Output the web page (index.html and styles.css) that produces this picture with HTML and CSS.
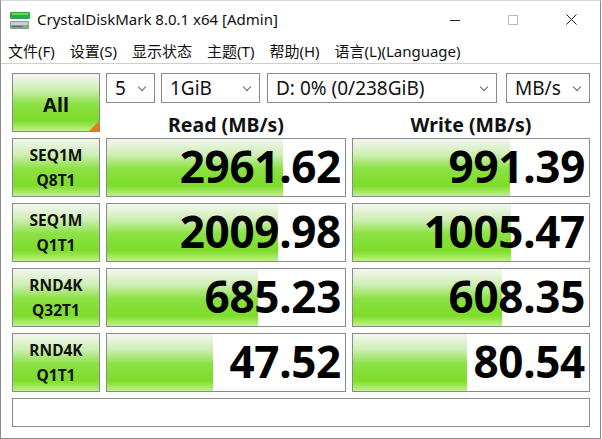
FILE: index.html
```html
<!DOCTYPE html>
<html lang="zh-CN">
<head>
    <meta charset="UTF-8">
    <title>CrystalDiskMark 8.0.1 x64 [Admin]</title>
    <link rel="stylesheet" href="styles.css">
</head>
<body>
    <div class="window">
        <div class="titlebar">
            <svg class="app-icon" width="22" height="22" viewBox="0 0 22 22">
                <rect x="1" y="3" width="20" height="7" rx="1" fill="#2fa84a"/>
                <rect x="3" y="4" width="16" height="2" fill="#6fd35a"/>
                <rect x="1" y="12" width="19" height="8" rx="1" fill="#8e9a96"/>
                <rect x="2" y="13" width="17" height="3" fill="#c9d0cd"/>
                <rect x="3" y="17" width="10" height="1" fill="#5c6662"/>
                <rect x="15" y="16.5" width="3" height="2" fill="#5fd35a"/>
            </svg>
            <span class="title">CrystalDiskMark 8.0.1 x64 [Admin]</span>
            <div class="controls">
                <span class="ctl"><svg width="10" height="10" viewBox="0 0 10 10"><line x1="0" y1="5.5" x2="10" y2="5.5" stroke="#222" stroke-width="1"/></svg></span>
                <span class="ctl"><svg width="10" height="10" viewBox="0 0 10 10"><rect x="0.5" y="0.5" width="9" height="9" fill="none" stroke="#bbb" stroke-width="1"/></svg></span>
                <span class="ctl"><svg width="11" height="11" viewBox="0 0 11 11"><path d="M0.5 0.5L10.5 10.5M10.5 0.5L0.5 10.5" stroke="#222" stroke-width="1"/></svg></span>
            </div>
        </div>

        <div class="menubar">
            <span>文件(F)</span>
            <span>设置(S)</span>
            <span>显示状态</span>
            <span>主题(T)</span>
            <span>帮助(H)</span>
            <span>语言(L)(Language)</span>
        </div>

        <div class="main">
            <div class="btn all">All<i class="corner"></i></div>

            <div class="selects">
                <div class="sel w5">5<b class="chev"></b></div>
                <div class="sel wsize">1GiB<b class="chev"></b></div>
                <div class="sel wdrive">D: 0% (0/238GiB)<b class="chev"></b></div>
                <div class="sel wunit">MB/s<b class="chev"></b></div>
            </div>
            <div class="head">Read (MB/s)</div>
            <div class="head">Write (MB/s)</div>

            <div class="btn">SEQ1M<br>Q8T1</div>
            <div class="val"><div class="fill" style="width:176px"></div><span>2961.62</span></div>
            <div class="val"><div class="fill" style="width:157px"></div><span>991.39</span></div>

            <div class="btn">SEQ1M<br>Q1T1</div>
            <div class="val"><div class="fill" style="width:171px"></div><span>2009.98</span></div>
            <div class="val"><div class="fill" style="width:158px"></div><span>1005.47</span></div>

            <div class="btn">RND4K<br>Q32T1</div>
            <div class="val"><div class="fill" style="width:151px"></div><span>685.23</span></div>
            <div class="val"><div class="fill" style="width:149px"></div><span>608.35</span></div>

            <div class="btn">RND4K<br>Q1T1</div>
            <div class="val"><div class="fill" style="width:106px"></div><span>47.52</span></div>
            <div class="val"><div class="fill" style="width:114px"></div><span>80.54</span></div>

            <div class="status"></div>
        </div>
    </div>
</body>
</html>
```

FILE: styles.css
```css
body {
    margin: 0;
    background: #ffffff;
    font-family: "Noto Sans", "Noto Sans CJK SC", sans-serif;
    color: #000;
}

.window {
    width: 599px;
    height: 437px;
    border: 1px solid #8c8c8c;
    border-top-color: #d8d8d8;
    background: #ffffff;
    overflow: hidden;
}

.titlebar {
    height: 37px;
    display: flex;
    align-items: center;
}

.app-icon {
    margin-left: 8px;
    margin-right: 6px;
}

.title {
    font-size: 15px;
    color: #111;
    flex: 1;
    padding-bottom: 1px;
}

.controls {
    display: flex;
    align-self: stretch;
}

.ctl {
    width: 58px;
    display: flex;
    align-items: center;
    justify-content: center;
}

.menubar {
    height: 25px;
    display: flex;
    align-items: center;
    gap: 15px;
    padding-left: 7px;
    font-size: 15px;
    color: #111;
    border-bottom: 1px solid #cfcfcf;
}

.main {
    display: grid;
    grid-template-columns: 88px 240px 238px;
    grid-template-rows: 30px 23px 59px 59px 59px 59px 29px;
    column-gap: 6px;
    row-gap: 6px;
    padding: 9px 0 0 11px;
}

.btn {
    border: 1px solid #8a8a8a;
    box-sizing: border-box;
    background: linear-gradient(to bottom, #f4f7f2 0%, #cdeeb2 28%, #8ce145 52%, #7ddd28 82%, #bff08e 100%);
    font-weight: bold;
    font-size: 15.5px;
    line-height: 25px;
    text-align: center;
    display: flex;
    align-items: center;
    justify-content: center;
    color: #111;
}

.btn.all {
    grid-row: span 2;
    font-size: 20px;
    padding-top: 3px;
    position: relative;
}

.corner {
    position: absolute;
    right: 0;
    bottom: 0;
    width: 0;
    height: 0;
    border-left: 10px solid transparent;
    border-bottom: 10px solid #f07a12;
}

.selects {
    grid-column: 2 / span 2;
    display: flex;
}

.sel {
    border: 1px solid #8a8a8a;
    box-sizing: border-box;
    height: 30px;
    font-size: 19px;
    line-height: 29px;
    padding-left: 8px;
    position: relative;
    color: #111;
}

.w5 { width: 49px; }
.wsize { width: 99px; margin-left: 6px; }
.wdrive { width: 230px; margin-left: 7px; }
.wunit { width: 84px; margin-left: 9px; }

.chev {
    position: absolute;
    right: 9px;
    top: 10px;
    width: 5px;
    height: 5px;
    border-right: 1px solid #666;
    border-bottom: 1px solid #666;
    transform: rotate(45deg);
}

.head {
    font-weight: bold;
    font-size: 19.5px;
    text-align: center;
    line-height: 23px;
    padding-top: 4px;
    color: #111;
}

.val {
    border: 1px solid #8a8a8a;
    box-sizing: border-box;
    position: relative;
    background: #ffffff;
    display: flex;
    align-items: center;
    justify-content: flex-end;
}

.fill {
    position: absolute;
    left: 0;
    top: 0;
    bottom: 0;
    background: linear-gradient(to bottom, #f4f7f2 0%, #cdeeb2 28%, #8ce145 52%, #7ddd28 82%, #bff08e 100%);
}

.val span {
    position: relative;
    font-weight: bold;
    font-size: 44px;
    line-height: 1;
    letter-spacing: -0.3px;
    padding-right: 4px;
    padding-bottom: 3px;
}

.status {
    grid-column: 1 / span 3;
    border: 1px solid #8a8a8a;
    box-sizing: border-box;
}
```
